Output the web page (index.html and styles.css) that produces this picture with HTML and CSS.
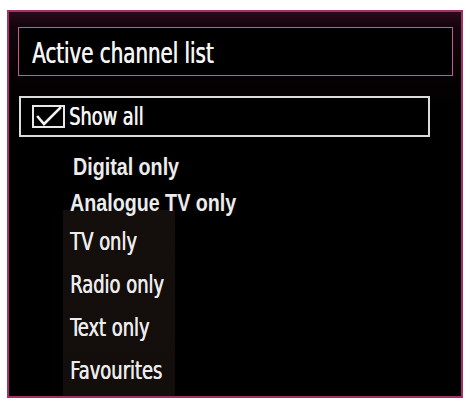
FILE: index.html
```html
<!DOCTYPE html>
<html lang="en">
<head>
<meta charset="utf-8">
<title>Active channel list</title>
<link rel="stylesheet" href="styles.css">
</head>
<body>
<div class="panel">
  <div class="title"><span class="txt txt-title">Active channel list</span></div>
  <div class="showall">
    <span class="checkbox">
      <svg viewBox="0 0 33 23" width="33" height="23" aria-hidden="true">
        <rect x="1" y="1" width="31" height="21" fill="none" stroke="#e8e8e8" stroke-width="2"/>
        <path d="M6 12 L12 19 L28 3" fill="none" stroke="#f2f2f2" stroke-width="2.6" stroke-linecap="square" stroke-linejoin="miter"/>
      </svg>
    </span>
    <span class="txt txt-label">Show all</span>
  </div>
  <ul class="options">
    <li class="opt opt-bold opt-first"><span class="txt txt-bold">Digital only</span></li>
    <li class="opt opt-bold"><span class="txt txt-bold">Analogue TV only</span></li>
    <li class="opt"><span class="txt txt-item">TV only</span></li>
    <li class="opt"><span class="txt txt-item">Radio only</span></li>
    <li class="opt"><span class="txt txt-item">Text only</span></li>
    <li class="opt"><span class="txt txt-item">Favourites</span></li>
  </ul>
</div>
</body>
</html>
```

FILE: styles.css
```css
html, body {
  margin: 0;
  padding: 0;
  background: #ffffff;
}

body {
  width: 467px;
  height: 401px;
  overflow: hidden;
  font-family: "DejaVu Sans Condensed", "DejaVu Sans", sans-serif;
  color: #f0f0f0;
}

.panel {
  margin: 10px 4px 0 7px;
  box-sizing: border-box;
  width: 456px;
  height: 388px;
  border: 2px solid #a63068;
  background: linear-gradient(180deg, #2a0a19 0px, #14050c 14px, #070204 60px, #000 100px), #000;
  padding: 15px 0 0 9px;
  display: flex;
  flex-direction: column;
}

.txt {
  display: inline-block;
  transform-origin: 0 50%;
  white-space: nowrap;
  text-shadow: 0.6px 0 0 currentColor;
}

.title {
  width: 435px;
  height: 49px;
  box-sizing: border-box;
  border: 1px solid #c75a8c;
  background: #000;
  padding: 4px 0 0 13px;
  line-height: 43px;
  color: #f4f4f4;
}

.txt-title {
  font-size: 28px;
  transform: scaleX(0.787);
}

.showall {
  margin-top: 20px;
  margin-left: 1px;
  width: 411px;
  height: 41px;
  box-sizing: border-box;
  border: 2px solid #dcdcdc;
  display: flex;
  align-items: center;
  gap: 4px;
  padding-left: 11px;
  background: #000;
}

.checkbox {
  display: block;
  width: 33px;
  height: 23px;
}

.checkbox svg {
  display: block;
}

.txt-label {
  font-size: 25px;
  line-height: 30px;
  color: #f4f4f4;
  transform: scaleX(0.79);
}

.options {
  flex: 1;
  list-style: none;
  margin: 0;
  padding: 0 0 0 52px;
  background: linear-gradient(#140e0c, #120c0a) no-repeat 45px 73px / 112px 400px;
}

.opt {
  font-size: 24px;
  line-height: 43px;
  color: #ececec;
}

.txt-item {
  transform: scaleX(0.83);
}

.opt-bold {
  line-height: 36px;
}

.txt-bold {
  font-family: "Liberation Sans", Arial, sans-serif;
  font-weight: bold;
  font-size: 24px;
  transform: scaleX(0.82);
  text-shadow: none;
}

.opt-first {
  margin-top: 12px;
  padding-left: 3px;
}
```
